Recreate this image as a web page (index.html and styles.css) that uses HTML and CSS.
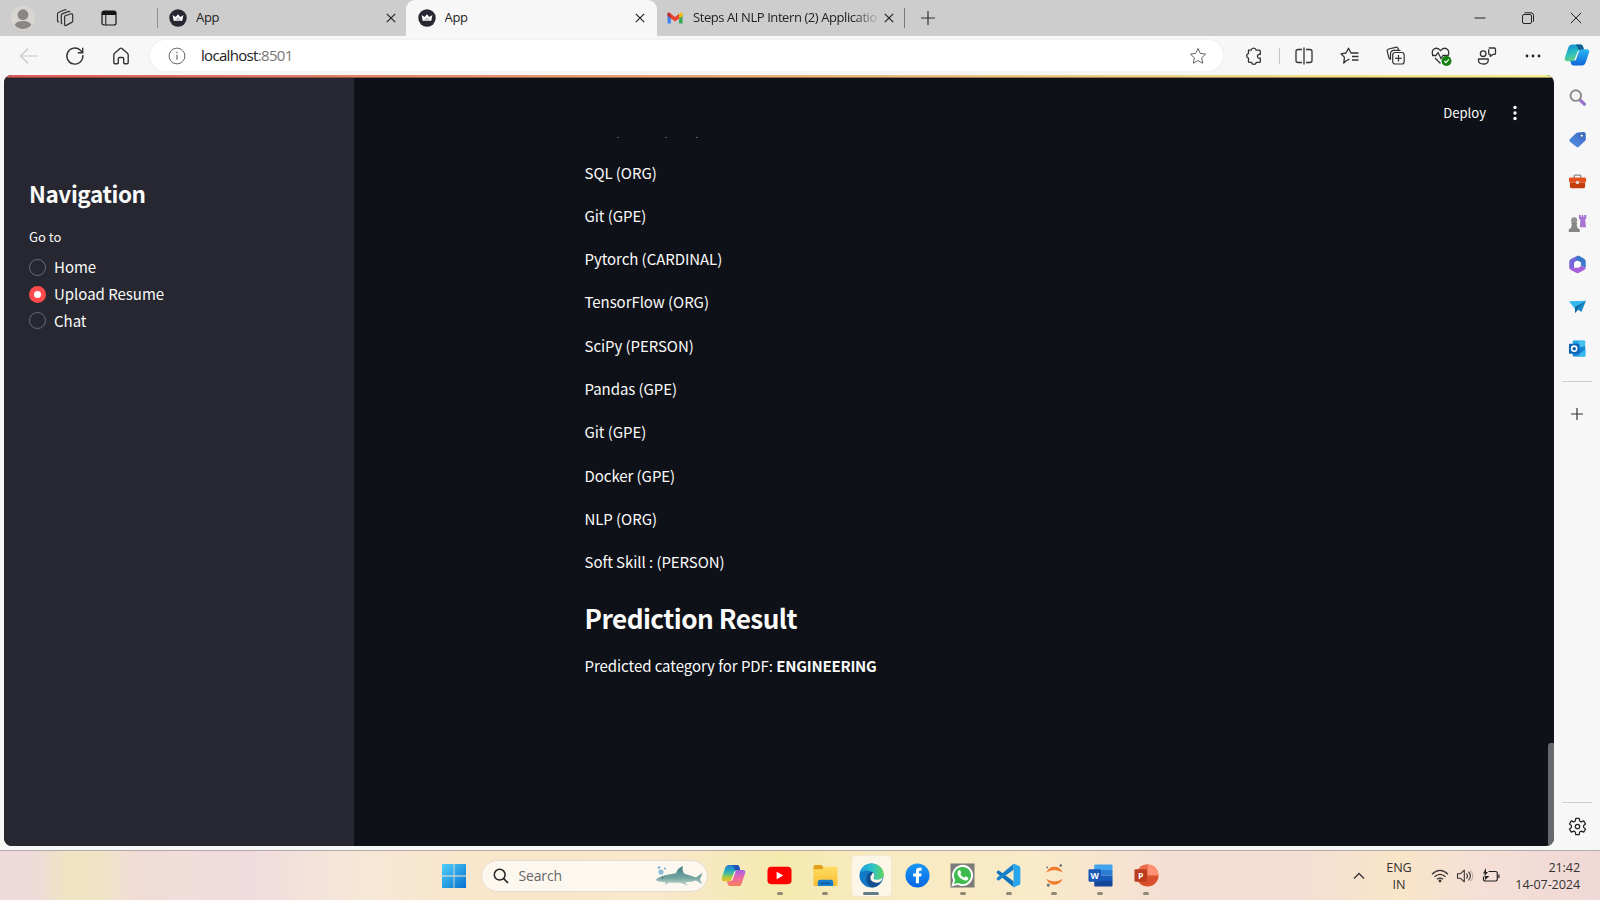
FILE: index.html
```html
<!DOCTYPE html>
<html lang="en">
<head>
<meta charset="utf-8">
<title>App</title>
<link rel="stylesheet" href="styles.css">
</head>
<body>
<svg class="defs" width="0" height="0" aria-hidden="true">
  <defs>
    <linearGradient id="cpA" x1="0" y1="0" x2="0.3" y2="1"><stop offset="0" stop-color="#1687d8"/><stop offset=".5" stop-color="#24b8c4"/><stop offset="1" stop-color="#62d38a"/></linearGradient>
    <linearGradient id="cpB" x1="0" y1="0" x2="0" y2="1"><stop offset="0" stop-color="#27b5f5"/><stop offset="1" stop-color="#1266d8"/></linearGradient>
    <linearGradient id="ccA" x1="0" y1="0" x2="0" y2="1"><stop offset="0" stop-color="#2078d8"/><stop offset=".45" stop-color="#30b6b0"/><stop offset=".75" stop-color="#a5cb42"/><stop offset="1" stop-color="#f3b91e"/></linearGradient>
    <linearGradient id="ccB" x1="0" y1="0" x2="0" y2="1"><stop offset="0" stop-color="#a65be8"/><stop offset=".5" stop-color="#ed6aa6"/><stop offset="1" stop-color="#f77f55"/></linearGradient>
    <linearGradient id="win" x1="0" y1="0" x2="1" y2="1"><stop offset="0" stop-color="#4fd0fb"/><stop offset="1" stop-color="#0670cf"/></linearGradient>
    <linearGradient id="tag" x1="0" y1="1" x2="1" y2="0"><stop offset="0" stop-color="#5a8fe8"/><stop offset="1" stop-color="#3769bd"/></linearGradient>
    <linearGradient id="edgeA" x1="0" y1="0" x2="1" y2="0"><stop offset="0" stop-color="#1a9fdf"/><stop offset=".55" stop-color="#2fc3c5"/><stop offset="1" stop-color="#5fd657"/></linearGradient>
    <linearGradient id="folder" x1="0" y1="0" x2="0" y2="1"><stop offset="0" stop-color="#ffdc62"/><stop offset="1" stop-color="#f8bd30"/></linearGradient>
    <linearGradient id="fb" x1="0" y1="0" x2="0" y2="1"><stop offset="0" stop-color="#1997f5"/><stop offset="1" stop-color="#0866e4"/></linearGradient>
    <linearGradient id="shark" x1="0" y1="0" x2="0" y2="1"><stop offset="0" stop-color="#3f7f86"/><stop offset=".6" stop-color="#75a5a2"/><stop offset="1" stop-color="#d5dfd2"/></linearGradient>
    <symbol id="crown" viewBox="0 0 18 18"><circle cx="9" cy="9" r="8.700" fill="#262730"/><path d="M3.600 6.100 6.600 8 9 5.200 11.400 8l3-1.900-1.200 5.800H4.800z" fill="#fff"/><path d="M4.800 11.900 9 8l4.200 3.900z" fill="#c7c8cc"/></symbol>
    <symbol id="x" viewBox="0 0 12 12"><path d="m1.800 1.800 8.400 8.400M10.200 1.800l-8.400 8.400" fill="none" stroke="#222" stroke-width="1.200"/></symbol>
  </defs>
</svg>

<div class="screen">
  <header class="tabbar">
    <div class="tab-tools">
      <svg class="avatar" viewBox="0 0 24 24"><circle cx="12" cy="12" r="12" fill="#d9d5d1"/><circle cx="12" cy="8.700" r="5.400" fill="#8a8684"/><path d="M3.700 19c1-3 3.800-4.100 8.300-4.100s7.300 1.100 8.300 4.100c-2 2.600-5 4-8.300 4s-6.300-1.400-8.300-4z" fill="#8a8684"/></svg>
      <svg class="ic20 workspaces" viewBox="0 0 20 20"><g fill="none" stroke="#333" stroke-width="1.200" stroke-linejoin="round"><path d="M9.800 8 16 5.800q1.700-.4 1.700 1.200v6q0 1-.9 1.400l-5.700 3q-1.500.6-1.500-1V9.200q0-.9.200-1.200z"/><path d="M7.500 15.700q-1.200.3-1.200-1V7.400q0-1.100.9-1.500l6.500-2.500q1-.2 1.300.8"/><path d="M4 13.800q-1.500.5-1.500-1V5.900q0-1 .9-1.400l6.300-2.800q1.200-.4 1.500.7"/></g></svg>
      <svg class="ic16 vtabs" viewBox="0 0 16 16"><rect x="1" y="1" width="14" height="14" rx="2" fill="none" stroke="#151515" stroke-width="1.200"/><path d="M1 5V3q0-2 2-2h10q2 0 2 2v2z" fill="#151515"/><path d="M4.800 5v10" stroke="#151515"/></svg>
    </div>
    <div class="tab">
      <svg class="fav"><use href="#crown"/></svg><span class="tab-title">App</span><svg class="close"><use href="#x"/></svg>
    </div>
    <div class="tab active">
      <svg class="fav"><use href="#crown"/></svg><span class="tab-title">App</span><svg class="close"><use href="#x"/></svg>
    </div>
    <div class="tab mail">
      <svg class="fav" viewBox="0 0 18 18"><path d="M1.500 5v9.500h3.400V8z" fill="#4384f3"/><path d="M16.500 5v9.500h-3.400V8z" fill="#31a952"/><path d="M1.500 4.500V7l3.400 2.500V4.800L3.600 3.700Q1.500 3 1.500 4.500z" fill="#c32a22"/><path d="M16.500 4.500V7l-3.400 2.500V4.800l1.300-1.100q2.100-.7 2.100.8z" fill="#fbbc05"/><path d="M4.900 4.700 9 7.900l4.100-3.200v4.800L9 12.600 4.900 9.500z" fill="#ea4335"/></svg>
      <span class="tab-title fade">Steps AI NLP Intern (2) Applicatio</span><svg class="close"><use href="#x"/></svg>
    </div>
    <svg class="ic16 newtab" viewBox="0 0 16 16"><path d="M8 1v14M1 8h14" stroke="#333" stroke-width="1.200"/></svg>
    <div class="window-controls">
      <svg viewBox="0 0 14 14"><path d="M1.500 7h11" stroke="#222"/></svg>
      <svg viewBox="0 0 14 14"><g fill="none" stroke="#222"><rect x="1.500" y="3.500" width="9" height="9" rx="1.500"/><path d="M3.500 1.800h6.500q2.500 0 2.500 2.500v6.500"/></g></svg>
      <svg viewBox="0 0 14 14"><path d="m1.800 1.800 10.400 10.400m0-10.400L1.800 12.200" stroke="#222"/></svg>
    </div>
  </header>

  <div class="browser">
    <div class="left">
      <nav class="toolbar">
        <div class="nav-buttons">
          <svg class="ic20" viewBox="0 0 20 20"><path d="M18.500 10h-17m7.500-7.500L1.500 10 9 17.500" fill="none" stroke="#c8c8c8" stroke-width="1.200"/></svg>
          <svg class="ic20" viewBox="0 0 20 20"><path d="M17.800 9.200A8 8 0 1 1 15.400 4.300L17.600 6.500M17.700 1.800v4.900h-4.900" fill="none" stroke="#333" stroke-width="1.400"/></svg>
          <svg class="ic20" viewBox="0 0 20 20"><path d="M2.800 9q0-1 .8-1.700L9 2.500q1-.8 2 0l5.400 4.800q.8.700.8 1.700v7.500q0 1.200-1.200 1.200h-2.300q-1 0-1-1v-4q0-1.200-1.200-1.200h-3q-1.200 0-1.200 1.200v4q0 1-1 1H4q-1.200 0-1.200-1.200z" fill="none" stroke="#333" stroke-width="1.400"/></svg>
        </div>
        <div class="address">
          <svg class="info" viewBox="0 0 18 18"><circle cx="9" cy="9" r="7.900" fill="none" stroke="#666"/><path d="M9 7.800v5M9 4.800v1.400" stroke="#666" stroke-width="1.200"/></svg>
          <span class="url">localhost<span class="port">:8501</span></span>
          <svg class="star" viewBox="0 0 18 18"><path d="m9 1.500 2.300 4.900 5.300.7-3.900 3.700 1 5.400L9 13.600l-4.700 2.600 1-5.400L1.400 7.100l5.300-.7z" fill="none" stroke="#666" stroke-linejoin="round"/></svg>
        </div>
        <div class="actions">
          <svg class="ic20" viewBox="0 0 20 20"><path d="M4.500 4.200h2.700a2.500 2.500 0 0 1 4.900 0h3.200q1 0 1 1v3.300a2 2 0 1 0 0 3.600v3.300q0 1-1 1h-2.900a2.500 2.500 0 0 1-4.900 0h-2q-1 0-1-1v-3.200a2.500 2.500 0 0 1 0-4.800z" fill="none" stroke="#333" stroke-width="1.300" stroke-linejoin="round"/></svg>
          <i class="bar"></i>
          <svg class="ic20" viewBox="0 0 20 20"><path d="M8 3.500H4q-2 0-2 2v9q0 2 2 2h4m4-13h4q2 0 2 2v9q0 2-2 2h-4M10 1.500v17" fill="none" stroke="#333" stroke-width="1.300"/></svg>
          <svg class="ic20" viewBox="0 0 20 20"><path d="M6.500 14.500 3.700 17l.8-5.600L1 7.800l5-.8 2.500-4.800L11 7h7.500M12 10.500h6.500M12 14h6.500M6.500 14.500l3-1.300" fill="none" stroke="#333" stroke-width="1.300" stroke-linejoin="round"/></svg>
          <svg class="ic20" viewBox="0 0 20 20"><g fill="none" stroke="#333" stroke-width="1.200"><rect x="6.700" y="6.500" width="11.500" height="11.500" rx="2.500"/><path d="M12.500 9v6.500M9.200 12.300h6.500M4.500 13.500q-1.200-.4-1.600-1.700L1.300 5.600q-.5-2 1.500-2.600L9.500 1.300q2-.4 2.700 1.400l.6 1.600M4.500 13.500V8q0-3.500 3.500-3.700h6.500"/></g></svg>
          <svg class="ic20 heart" viewBox="0 0 20 20"><path d="M2.200 10Q-.1 5.500 3 3q3.600-2 6.500 1.600Q12.500 1 16 3q3 2.400 1 7M4 12l5.500 5.500M1 9.500h4l2-3 3 6 2-3h5" fill="none" stroke="#333" stroke-width="1.300"/><circle cx="15.500" cy="15" r="5" fill="#14800f"/><path d="m13.300 15 1.600 1.600 3-3.200" fill="none" stroke="#fff" stroke-width="1.200"/></svg>
          <svg class="ic20" viewBox="0 0 20 20"><g fill="none" stroke="#333" stroke-width="1.300" stroke-linejoin="round"><circle cx="6.200" cy="7.700" r="2.800"/><path d="M1.500 13h9.700v1.500q0 3.500-4.800 3.500t-4.900-3.500zM11.800 2h5.500q1.200 0 1.200 1.200v4q0 1.200-1.200 1.200h-1.500l-2.500 2v-2h-.4q-1.200 0-1.200-1.200V3.200"/></g></svg>
          <svg class="ic20" viewBox="0 0 20 20"><g fill="#222"><circle cx="4" cy="10" r="1.400"/><circle cx="10" cy="10" r="1.400"/><circle cx="16" cy="10" r="1.400"/></g></svg>
        </div>
      </nav>

      <div class="page">
        <div class="rainbow"></div>
        <aside class="nav-panel">
          <h2>Navigation</h2>
          <div class="group-label">Go to</div>
          <div class="radio"><i></i><span>Home</span></div>
          <div class="radio checked"><i></i><span>Upload Resume</span></div>
          <div class="radio"><i></i><span>Chat</span></div>
        </aside>
        <main>
          <div class="app-header"><span>Deploy</span>
            <svg viewBox="0 0 6 16"><g fill="#fafafa"><circle cx="3" cy="2.500" r="1.700"/><circle cx="3" cy="8" r="1.700"/><circle cx="3" cy="13.500" r="1.700"/></g></svg>
          </div>
          <div class="clipped"><i></i><i></i><i></i></div>
          <div class="content">
            <p>SQL (ORG)</p>
            <p>Git (GPE)</p>
            <p>Pytorch (CARDINAL)</p>
            <p>TensorFlow (ORG)</p>
            <p>SciPy (PERSON)</p>
            <p>Pandas (GPE)</p>
            <p>Git (GPE)</p>
            <p>Docker (GPE)</p>
            <p>NLP (ORG)</p>
            <p>Soft Skill : (PERSON)</p>
            <h1>Prediction Result</h1>
            <p>Predicted category for PDF: <b>ENGINEERING</b></p>
          </div>
          <div class="scroll-thumb"></div>
        </main>
      </div>
    </div>

    <aside class="edge-bar">
      <svg class="copilot" viewBox="0 0 26 24"><path d="M8 1.500h8.500q2 0 2.600 2.200l.8 2.800h-3q-2.200 0-2.900 2.200l-2.600 7.500q-.7 2.100-2.900 2.100H3.400Q.2 18.300.8 15L4.400 4.200Q5.400 1.500 8 1.500z" fill="url(#cpA)"/><path d="M18 22.500H9.500q-2 0-2.600-2.200l-.6-2.500h2.800q2.200 0 2.900-2.200l2.600-7.300q.7-2.100 2.900-2.100h5Q25.800 6.200 25.200 9l-3.600 10.800q-1 2.700-3.600 2.700z" fill="url(#cpB)"/><path d="M12 1.500h4.500q2 0 2.600 2.200l.8 2.800h-3l-2 .5z" fill="#145c8f"/><path d="M15.300 7.500 11.800 17l-1.700.7 3.700-9.500z" fill="#f7f7f7"/></svg>
      <svg class="side" viewBox="0 0 20 20"><path d="m12.500 12.500 4.800 4.500" stroke="#9a70cc" stroke-width="3.400" stroke-linecap="round"/><circle cx="8.200" cy="8" r="5.600" fill="#f4f5f7" stroke="#8a8a8a" stroke-width="2"/></svg>
      <svg class="side" viewBox="0 0 20 20"><path d="m10.500 2.500 6-.5q2 0 2.100 2l.2 5.500q0 1-.8 1.700l-6.500 6.300q-1.400 1.300-2.800 0L2 12.300q-1.300-1.500 0-2.900L8.700 3.200q.8-.7 1.800-.7z" fill="url(#tag)"/><circle cx="14.500" cy="6" r="1.700" fill="#fff" stroke="#315591"/></svg>
      <svg class="side" viewBox="0 0 20 20"><path d="M6.500 6V4.500q0-1.200 1.200-1.200h4.600q1.200 0 1.200 1.200V6" fill="none" stroke="#888" stroke-width="1.500"/><rect x="1" y="5.800" width="18" height="5.200" rx="1.200" fill="#e4511d"/><path d="M2 11h16v4.500q0 1.500-1.500 1.500h-13Q2 17 2 15.500z" fill="#c63d0d"/><circle cx="10" cy="11" r="1.900" fill="#d8d3cf"/></svg>
      <svg class="side" viewBox="0 0 20 20"><path d="M11.500 1v4l1.500 1-.5 8h6.500l-1-8 1.200-1V1H17v2h-1V1h-1.500v2h-1V1z" fill="#a873d2"/><circle cx="6.500" cy="6.500" r="3.200" fill="#929292"/><path d="M3.500 9h6v1.700H9l.8 3.700 2.600 2v2.600H.8v-2.600l2.500-2 .8-3.700h-.6z" fill="#858585"/></svg>
      <svg class="side" viewBox="0 0 20 20"><path d="M10 .8 3 4.200Q1.300 5.200 1.300 7v6.500L6.500 16V8L14 3z" fill="#7568d8"/><path d="M10 .8q.8-.3 1.600.1L17 4q1.700 1 1.700 3v6.300L13.500 11V7.500L8 5z" fill="#3b78c9"/><path d="M1.300 13.500q.3 1.500 1.700 2.300l5.500 3q1.500.7 3 0l5.500-3q1.400-.8 1.700-2.500L13.500 11 6.500 14z" fill="#a860d8"/><circle cx="10" cy="10" r="3.500" fill="#fff"/></svg>
      <svg class="side" viewBox="0 0 20 20"><path d="M1 4.500 19 4 7.500 12.500z" fill="#35b9ed"/><path d="M19 4 7.500 10.500l-.2 6.500z" fill="#0f629f"/><path d="M19 4 9 12l5 3.700z" fill="#1688c9"/></svg>
      <svg class="side" viewBox="0 0 20 20"><rect x="5" y="1.500" width="13" height="15" rx="1" fill="#1ba1e4"/><path d="M11 2h7v6h-7z" fill="#44bfee"/><path d="m5 11 13-3v9.500q0 1-1 1H6q-1 0-1-1z" fill="#1680d1"/><path d="m9 18.500 9.500-8v7q0 1-1 1z" fill="#35b8ed"/><rect x="1" y="5" width="11" height="10.500" rx="1" fill="#0a63b4"/><circle cx="6.500" cy="10.200" r="2.700" fill="none" stroke="#fff" stroke-width="1.600"/></svg>
      <i class="rule"></i>
      <svg class="plus" viewBox="0 0 16 16"><path d="M8 2v12M2 8h12" stroke="#333" stroke-width="1.200"/></svg>
      <i class="rule bottom"></i>
      <svg class="gear" viewBox="0 0 20 20"><path d="m8.200 1.500-.5 2.700-1.600.9-2.600-1L1.600 7.300l2 1.800v1.800l-2 1.800 1.900 3.200 2.600-1 1.600.9.500 2.700h3.600l.5-2.700 1.600-.9 2.600 1 1.900-3.200-2-1.800V9.100l2-1.800-1.900-3.200-2.600 1-1.600-.9-.5-2.700z" fill="none" stroke="#222" stroke-width="1.300" stroke-linejoin="round"/><circle cx="10" cy="10" r="2.300" fill="none" stroke="#222" stroke-width="1.300"/></svg>
    </aside>
  </div>

  <footer class="taskbar">
    <svg class="start" viewBox="0 0 24 24"><path d="M0 0h11.600v11.600H0zM12.400 0H24v11.600H12.400zM0 12.400h11.600V24H0zM12.400 12.400H24V24H12.400z" fill="url(#win)"/></svg>
    <div class="search">
      <svg class="glass" viewBox="0 0 16 16"><circle cx="6.700" cy="6.700" r="5.400" fill="none" stroke="#222" stroke-width="1.500"/><path d="m10.700 10.700 4.300 4.300" stroke="#222" stroke-width="1.700"/></svg>
      <span>Search</span>
      <svg class="shark" viewBox="0 0 48 22"><path d="M.5 15Q5 10.500 14 9.500q4-.7 7-1.300Q22.500 3 28 1q-1.500 4.500 1.500 7.800 6 1.500 11.500 3.700L47.500 8q-1.800 4.500-2.500 6l2.500 6-6.500-4.500q-5.500 1.800-10.500 1.500l2.500 4-8.500-3.500q-6 .5-10 0L9.500 20l1-3Q4 17.500.5 15z" fill="url(#shark)"/><circle cx="6" cy="7" r="2.600" fill="#8dbdd6"/><circle cx="4" cy="2.500" r="1.300" fill="#7faed0"/><circle cx="10" cy="3.500" r="1.100" fill="#7faed0"/><circle cx="7.500" cy="12.800" r=".6" fill="#222"/></svg>
    </div>
    <div class="apps">
      <div class="app"><svg viewBox="0 0 26 24"><path d="M8 1h8.500q2 0 2.600 2.200l.8 3h-3q-2.200 0-2.900 2.200l-2.600 7.500q-.7 2.100-2.900 2.100H3.400Q.2 18 .8 14.700L4.400 3.700Q5.400 1 8 1z" fill="url(#ccA)"/><path d="M18 23H9.500q-2 0-2.600-2.200L6.300 18h2.800q2.200 0 2.900-2.200l2.600-7.500q.7-2.100 2.900-2.100h5q3.300 0 2.700 3l-3.600 11Q20.600 23 18 23z" fill="url(#ccB)"/><path d="M12 1h4.500q2 0 2.600 2.200l.8 3h-3l-2 .5z" fill="#1d55b8"/><path d="M15.300 7.500 11.800 17l-1.700.7 3.700-9.500z" fill="#f8ecc8"/></svg></div>
      <div class="app run"><svg viewBox="0 0 26 24"><rect x=".5" y="3" width="25" height="18" rx="4" fill="#f00"/><path d="m10 8 7 4-7 4z" fill="#fff"/></svg></div>
      <div class="app run"><svg viewBox="0 0 26 24"><path d="M.5 3Q.5 1 2.500 1h6l2.500 2.500v4H.5z" fill="#dfa11c"/><path d="M.5 5.500h9L12 3h12q1.500 0 1.500 1.500v17q0 1.500-1.500 1.500H2Q.5 23 .5 21.500z" fill="url(#folder)"/><path d="M5 23v-4q0-2.500 2.500-2.500h11q2.500 0 2.500 2.500v4z" fill="#167ccc"/><path d="M8 20h10" stroke="#0b4c8c" stroke-width="1.200"/></svg></div>
      <div class="app current"><svg viewBox="0 0 26 26"><circle cx="13" cy="13" r="12.500" fill="#1279c7"/><path d="M1 10Q4 .5 13 .5q8 0 12 7.500 2 7-3 9-6 1.800-7-1 2.600-3.600-.5-6Q8.500 5.500 1 10z" fill="url(#edgeA)"/><path d="M8 14q1-4 5.500-5 4.500 2.500 1.500 6.500.5 3.500 7.500 2.300l2-1Q21 25 13.500 25.500 6 22 8 14z" fill="#114f91"/><path d="M14.500 9.800q3 2.600.5 6 1 2.500 7 1.200l3-2q-1.500 5.500-7 5.500-7-1-6-6.500z" fill="#fcf6e6"/></svg></div>
      <div class="app"><svg viewBox="0 0 26 26"><circle cx="13" cy="13" r="12.500" fill="url(#fb)"/><path d="M11.300 21v-7H8.500v-3.200h2.800V8.500Q11.300 5 15 5h2.300v3h-1.500q-1.300 0-1.300 1.300v1.500h2.800L16.800 14h-2.300v7z" fill="#fff"/></svg></div>
      <div class="app run"><svg viewBox="0 0 26 26"><path d="M.5.500h25v25H.5z" fill="#7b7b78"/><path d="M1.500 24.500 3.300 18A11 11 0 1 1 8 22.700z" fill="#fff"/><path d="m4.200 21.800 1.200-4.200a8.900 8.900 0 1 1 3.200 3.100z" fill="#3dbb4c"/><path d="M9 7.500h1.500l1.300 3-1 1.300q1.500 2.700 4 3.500l1.300-1.400 3 1.400q0 3-3.500 3-6-1.300-8-7.300 0-2.300 1.400-3.500z" fill="#fff"/></svg></div>
      <div class="app run"><svg viewBox="0 0 26 26"><path d="M2.500 7.500.8 9v1.500l17.500 14.700V19z" fill="#1072b9"/><path d="M2.500 18.500.8 17v-1.500L18.300.8V7z" fill="#1682c9"/><path d="M18.300.5 24 3q1.300.6 1.300 2v16q0 1.400-1.300 2l-5.700 2.500z" fill="#27a5ed"/></svg></div>
      <div class="app run"><svg viewBox="0 0 26 26"><path d="M4.500 10Q7 4 13 4t8.500 6Q17.500 7.300 13 7.300T4.500 10zM4.500 16.500Q7 22.500 13 22.500t8.500-6q-4 2.700-8.500 2.700t-8.500-2.700z" fill="#ef7c2a"/><circle cx="19.500" cy="2.700" r="1.300" fill="#666"/><circle cx="5.500" cy="4.500" r=".9" fill="#666"/><circle cx="6.500" cy="23" r="1.600" fill="#777"/></svg></div>
      <div class="app run"><svg viewBox="0 0 26 26"><path d="M6.500 2.500q0-1 1-1h17q1 0 1 1v5h-19z" fill="#43a4ee"/><path d="M6.500 7.300h19V13h-19z" fill="#2d7fd6"/><path d="M6.500 13h19v5.700h-19z" fill="#185abd"/><path d="M6.500 18.500h19v5q0 1-1 1h-17q-1 0-1-1z" fill="#15459a"/><rect x=".5" y="6.500" width="13" height="13" rx="1.200" fill="#1858b5"/><text x="7" y="16.500" class="glyph">W</text></svg></div>
      <div class="app run"><svg viewBox="0 0 26 26"><circle cx="14" cy="13" r="11.500" fill="#d9512c"/><path d="M14 1.500A11.500 11.500 0 0 1 25.500 13H14z" fill="#ff9172"/><path d="M14 1.500V13H2.500A11.500 11.500 0 0 1 14 1.500z" fill="#ed6c47"/><rect x=".5" y="6.500" width="13" height="13" rx="1.200" fill="#bd3b1e"/><text x="7" y="16.500" class="glyph">P</text></svg></div>
    </div>
    <div class="tray">
      <svg class="chev" viewBox="0 0 12 8"><path d="m1 6.500 5-5 5 5" fill="none" stroke="#333" stroke-width="1.300"/></svg>
      <div class="lang"><span>ENG</span><span>IN</span></div>
      <svg class="wifi" viewBox="0 0 18 16"><g fill="none" stroke="#333" stroke-width="1.200"><path d="M1 6.200q8-7.600 16 0M3.500 8.800q5.500-5 11 0M6 11.300q3-2.500 6 0"/></g><circle cx="9" cy="13" r="1.400" fill="#333"/></svg>
      <svg class="speaker" viewBox="0 0 18 16"><path d="M1.500 5.700h3L8.300 2.200v11.600l-3.800-3.500h-3zM10.500 5.500q2 2.500 0 5M12.500 3.700q3.700 4.300 0 8.600" fill="none" stroke="#333" stroke-width="1.100" stroke-linejoin="round"/><path d="M14.500 2.300q4.500 5.700 0 11.400" fill="none" stroke="#b5aaa0"/></svg>
      <svg class="battery" viewBox="0 0 18 16"><path d="M6.500 3.500h7q1.800 0 1.800 1.800v6q0 1.700-1.800 1.700H3.200q-1.700 0-1.700-1.700V8.500" fill="none" stroke="#222" stroke-width="1.200"/><path d="M16.300 6.500h1.200v3.500h-1.200zM3 8h4.500L3 12zM4 0 1 5.500h2L2 9l4-5H4z" fill="#222"/></svg>
      <div class="clock"><span>21:42</span><span>14-07-2024</span></div>
    </div>
  </footer>
</div>
</body>
</html>
```
FILE: styles.css
```css
* { box-sizing: border-box; }
body { margin: 0; width: 1600px; height: 900px; overflow: hidden; font-family: "Open Sans", "Noto Sans", sans-serif; color: #222; }
svg { display: block; flex: none; overflow: visible; }
.defs { position: absolute; }
.screen { width: 1600px; height: 900px; display: grid; grid-template-rows: 36px 815px 49px; background: #f7f7f7; }

/* tab strip */
.tabbar { display: flex; align-items: center; background: #cdcdcd; }
.tab-tools { width: 158px; height: 20px; display: flex; align-items: center; padding-left: 11px; border-right: 1px solid #8e8e8e; }
.avatar { width: 24px; height: 24px; }
.ic20 { width: 20px; height: 20px; }
.ic16 { width: 16px; height: 16px; }
.workspaces { margin-left: 19.500px; }
.vtabs { margin-left: 26px; }
.tab { width: 248px; height: 36px; display: flex; align-items: center; padding: 0 9px 0 11px; }
.tab.active { width: 251px; padding: 0 11px 0 11.500px; background: #f7f7f7; border-radius: 9px 9px 0 0; }
.tab.mail { width: 248px; height: 20px; padding: 0 9px; border-right: 1px solid #777; }
.fav { width: 18px; height: 18px; }
.tab-title { flex: 1; margin-left: 9px; font-size: 13px; letter-spacing: -.3px; white-space: nowrap; overflow: hidden; line-height: 20px; padding-bottom: 2px; }
.fade { letter-spacing: -.42px; -webkit-mask-image: linear-gradient(90deg, #000 84%, transparent 99%); mask-image: linear-gradient(90deg, #000 84%, transparent 99%); }
.close { width: 12px; height: 12px; }
.newtab { margin-left: 15px; }
.window-controls { margin-left: auto; display: flex; gap: 34px; padding-right: 17px; }
.window-controls svg { width: 14px; height: 14px; }

/* browser body */
.browser { display: grid; grid-template-columns: 1554px 46px; border-bottom: 1px solid #b3acad; background: #f7f7f7; }
.left { display: grid; grid-template-rows: 39px 771px; }
.toolbar { display: flex; align-items: center; }
.nav-buttons { width: 150px; padding-left: 19px; display: flex; gap: 26px; }
.address { width: 1073px; height: 31px; border-radius: 16px; background: #fff; display: flex; align-items: center; padding: 0 16px 0 18px; box-shadow: 0 0 3px #e9e9e9; }
.info { width: 18px; height: 18px; }
.url { flex: 1; margin-left: 15px; font-size: 15px; letter-spacing: -.68px; line-height: 20px; padding-bottom: 1px; }
.port { color: #777; }
.star { width: 18px; height: 18px; }
.actions { display: flex; align-items: center; margin-left: 21px; gap: 25.700px; }
.bar { width: 1px; height: 16px; background: #c4c4c4; margin: 0 -11px; }

/* application page */
.page { position: relative; margin-left: 4px; display: grid; grid-template-columns: 350px 1fr; border-radius: 8px; overflow: hidden; background: #0e1117; font-family: "Noto Sans CJK SC", sans-serif; color: #fafafa; }
.rainbow { position: absolute; inset: 0 0 auto 0; height: 3px; background: linear-gradient(90deg, #dc5c5c, #e79970 35%, #ecc784 65%, #f4f08c); border-bottom: 1px solid rgba(50, 25, 10, .45); }
.nav-panel { background: #262730; padding: 97px 25px 0; }
.nav-panel h2 { margin: 0; font-size: 22.500px; line-height: 42px; font-weight: 700; letter-spacing: -.4px; }
.group-label { margin-top: 13px; font-size: 13px; line-height: 20px; }
.radio { display: flex; align-items: center; height: 26.700px; gap: 8px; font-size: 15px; letter-spacing: -.02px; }
.group-label + .radio { margin-top: 7px; }
.radio i { width: 17px; height: 17px; border: 1px solid #6c6d76; border-radius: 50%; }
.radio.checked i { border: 5.500px solid #ff4b4b; background: #fff; }
.radio span { line-height: 24px; }
main { position: relative; }
.app-header { height: 60px; padding: 26px 36px 0 0; display: flex; align-items: flex-start; justify-content: flex-end; gap: 26px; font-size: 13.100px; line-height: 24px; }
.app-header svg { width: 6px; height: 16px; margin-top: 4px; }
.clipped { height: 3px; padding: 2px 0 0 263px; display: flex; gap: 46px; }
.clipped i { width: 2px; height: 1px; background: #555a61; }
.clipped i:last-child { margin-left: -17px; }
.content { padding: 22.500px 0 0 230.500px; font-size: 15px; letter-spacing: -.06px; }
.content p { margin: 0 0 19.330px; line-height: 24px; white-space: nowrap; }
.content h1 { margin: 25.500px 0 18px; font-size: 26.200px; line-height: 36px; font-weight: 700; letter-spacing: -.55px; }
.content b { letter-spacing: -.24px; }
.scroll-thumb { position: absolute; right: 0; bottom: 0; width: 6px; height: 103px; background: #68696d; border-radius: 3px 0 0; }

/* edge sidebar */
.edge-bar { display: flex; flex-direction: column; align-items: center; padding-top: 7px; }
.copilot { width: 26px; height: 24px; margin-bottom: 21px; }
.side { width: 19px; height: 19px; margin-bottom: 22.850px; }
.rule { width: 30px; height: 1px; background: #d0d0d0; margin-top: .5px; }
.plus { width: 16px; height: 16px; margin-top: 24px; }
.rule.bottom { margin-top: auto; }
.gear { width: 19px; height: 19px; margin: 14px 0 14px; }

/* taskbar */
.taskbar { display: flex; align-items: center; background: linear-gradient(90deg, #eedbd9 0, #eedbd9 35px, #f0e3c3 65px, #f0e3c5 100px, #f1ddd6 135px, #f0dcde 250px, #f7e7d7 360px, #f8e7ca 470px, #f8e8cc 660px, #f4eaae 780px, #f8eabf 870px, #f9eac9 1040px, #f4dfd4 1170px, #f4dfd4 1300px, #f9e5c8 1400px, #f5dfd6 1480px, #f0d8d6 1600px); }
.start { width: 24px; height: 24px; margin-left: 441.500px; }
.search { width: 227px; height: 32px; margin-left: 15px; display: flex; align-items: center; border-radius: 16px; border: 1px solid #e7dcc9; background: #fdf8ef; padding: 0 4px 0 11px; font-size: 14px; letter-spacing: -.15px; color: #666; }
.glass { width: 16px; height: 16px; }
.search span { flex: 1; margin-left: 10px; }
.shark { width: 48px; height: 22px; }
.apps { display: flex; margin-left: 3.500px; height: 49px; }
.app { width: 45.800px; display: flex; flex-direction: column; align-items: center; justify-content: center; position: relative; }
.app svg { width: 25px; height: 25px; position: relative; }
.run::after { content: ""; position: absolute; bottom: 5px; width: 6px; height: 3px; border-radius: 2px; background: #8e8876; }
.current::before { content: ""; position: absolute; top: 4px; left: 3px; width: 39px; height: 40px; border-radius: 4px; background: #fcf6e6; border: 1px solid #f2e6cc; }
.current::after { content: ""; position: absolute; bottom: 5px; width: 16px; height: 3px; border-radius: 2px; background: #617b88; }
.glyph { font: 700 9px "Open Sans", sans-serif; fill: #fff; text-anchor: middle; }
.tray { display: flex; align-items: center; margin-left: auto; padding-right: 20px; font-size: 12.600px; color: #333; }
.chev { width: 12px; height: 8px; }
.lang { width: 44px; margin: 0 10px 0 12px; }
.lang, .clock { display: flex; flex-direction: column; align-items: center; line-height: 17px; letter-spacing: -.1px; }
.wifi { width: 18px; height: 16px; }
.speaker { width: 18px; height: 16px; margin-left: 7px; }
.battery { width: 18px; height: 16px; margin-left: 8px; }
.clock { width: 66px; margin-left: 14px; align-items: flex-end; white-space: nowrap; }
```
